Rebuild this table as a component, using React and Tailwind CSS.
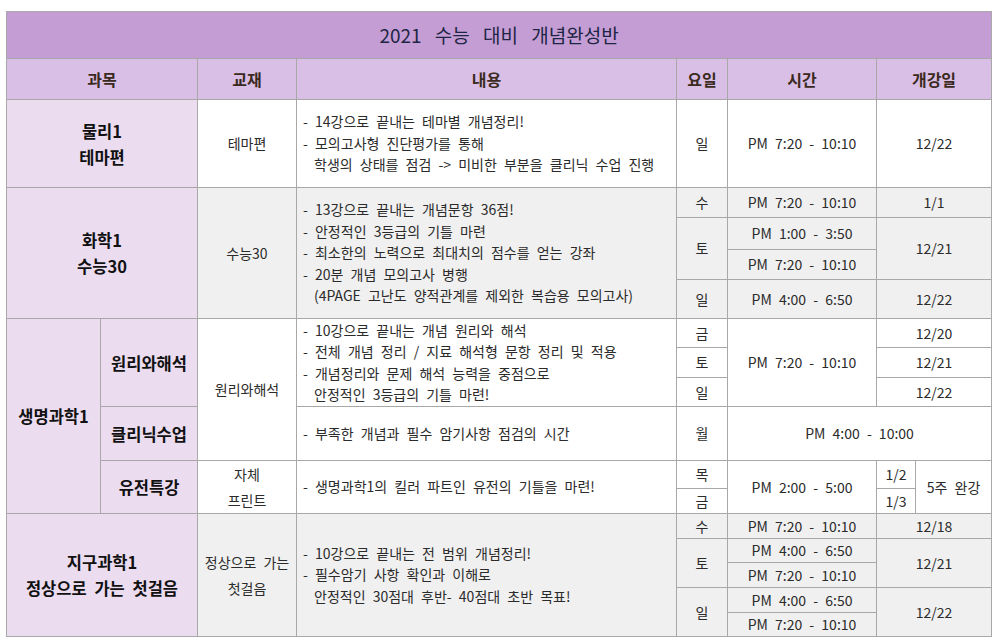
const FONT = { fontFamily: '"Noto Sans CJK KR", "Noto Sans", sans-serif', wordSpacing: "4px" };

const B = "border border-[#a8a8a8]";
const SUBJ = `${B} bg-[#ebdcf0] text-center align-middle font-bold text-[16.5px] text-[#111] leading-[26px]`;
const CELL = `${B} text-center align-middle text-[14px] text-[#2b2b2b]`;
const DESC = `${B} align-middle text-left text-[14px] text-[#2b2b2b] leading-[21.5px] pl-[6px]`;
const HEAD = `${B} font-bold`;

const Lines = ({ items }) => (
  <div>
    {items.map((t, i) => (
      <div key={i} className={t.startsWith("-") ? "" : "pl-[11px]"}>
        {t}
      </div>
    ))}
  </div>
);

const App = () => {
  const g = "bg-[#f0f0f0]";
  return (
    <div className="w-[1000px] h-[644px] bg-white pt-[11px] pl-[6px]" style={FONT}>
      <table className="border-collapse table-fixed w-[985px] border border-[#9a9a9a]">
        <colgroup>
          <col className="w-[94px]" />
          <col className="w-[97px]" />
          <col className="w-[99px]" />
          <col className="w-[380px]" />
          <col className="w-[51px]" />
          <col className="w-[149px]" />
          <col className="w-[39px]" />
          <col className="w-[76px]" />
        </colgroup>
        <tbody>
          <tr className="h-[47px]">
            <th colSpan={8} className={`${B} bg-[#c49dd4] text-[19px] font-normal text-[#1e2544]`} style={{ wordSpacing: "9px" }}>
              2021 수능 대비 개념완성반
            </th>
          </tr>
          <tr className="h-[41px] bg-[#d9bfe6] text-[16px] text-[#3b2a20]">
            <th colSpan={2} className={HEAD}>과목</th>
            <th className={HEAD}>교재</th>
            <th className={HEAD}>내용</th>
            <th className={HEAD}>요일</th>
            <th className={HEAD}>시간</th>
            <th colSpan={2} className={HEAD}>개강일</th>
          </tr>

          {/* 물리 */}
          <tr className="h-[88px]">
            <td colSpan={2} className={SUBJ}>물리1<br />테마편</td>
            <td className={CELL}>테마편</td>
            <td className={DESC}>
              <Lines items={["- 14강으로 끝내는 테마별 개념정리!", "- 모의고사형 진단평가를 통해", "학생의 상태를 점검 -> 미비한 부분을 클리닉 수업 진행"]} />
            </td>
            <td className={CELL}>일</td>
            <td className={CELL}>PM 7:20 - 10:10</td>
            <td colSpan={2} className={CELL}>12/22</td>
          </tr>

          {/* 화학 */}
          <tr className={`h-[30px] ${g}`}>
            <td colSpan={2} rowSpan={4} className={SUBJ}>화학1<br />수능30</td>
            <td rowSpan={4} className={CELL}>수능30</td>
            <td rowSpan={4} className={DESC}>
              <Lines items={["- 13강으로 끝내는 개념문항 36점!", "- 안정적인 3등급의 기틀 마련", "- 최소한의 노력으로 최대치의 점수를 얻는 강좌", "- 20분 개념 모의고사 병행", "(4PAGE 고난도 양적관계를 제외한 복습용 모의고사)"]} />
            </td>
            <td className={CELL}>수</td>
            <td className={CELL}>PM 7:20 - 10:10</td>
            <td colSpan={2} className={CELL}>1/1</td>
          </tr>
          <tr className={`h-[32px] ${g}`}>
            <td rowSpan={2} className={CELL}>토</td>
            <td className={CELL}>PM 1:00 - 3:50</td>
            <td colSpan={2} rowSpan={2} className={CELL}>12/21</td>
          </tr>
          <tr className={`h-[30px] ${g}`}>
            <td className={CELL}>PM 7:20 - 10:10</td>
          </tr>
          <tr className={`h-[39px] ${g}`}>
            <td className={CELL}>일</td>
            <td className={CELL}>PM 4:00 - 6:50</td>
            <td colSpan={2} className={CELL}>12/22</td>
          </tr>

          {/* 생명과학 */}
          <tr className="h-[29px]">
            <td rowSpan={6} className={SUBJ}>생명과학1</td>
            <td rowSpan={3} className={SUBJ}>원리와해석</td>
            <td rowSpan={4} className={CELL}>원리와해석</td>
            <td rowSpan={3} className={DESC}>
              <Lines items={["- 10강으로 끝내는 개념 원리와 해석", "- 전체 개념 정리 / 지료 해석형 문항 정리 및 적용", "- 개념정리와 문제 해석 능력을 중점으로", "안정적인 3등급의 기틀 마련!"]} />
            </td>
            <td className={CELL}>금</td>
            <td rowSpan={3} className={CELL}>PM 7:20 - 10:10</td>
            <td colSpan={2} className={CELL}>12/20</td>
          </tr>
          <tr className="h-[30px]">
            <td className={CELL}>토</td>
            <td colSpan={2} className={CELL}>12/21</td>
          </tr>
          <tr className="h-[29px]">
            <td className={CELL}>일</td>
            <td colSpan={2} className={CELL}>12/22</td>
          </tr>
          <tr className="h-[54px]">
            <td className={SUBJ}>클리닉수업</td>
            <td className={DESC}>
              <Lines items={["- 부족한 개념과 필수 암기사항 점검의 시간"]} />
            </td>
            <td className={CELL}>월</td>
            <td colSpan={3} className={CELL}>PM 4:00 - 10:00</td>
          </tr>
          <tr className="h-[28px]">
            <td rowSpan={2} className={SUBJ}>유전특강</td>
            <td rowSpan={2} className={`${CELL} leading-[26px]`}>자체<br />프린트</td>
            <td rowSpan={2} className={DESC}>
              <Lines items={["- 생명과학1의 킬러 파트인 유전의 기틀을 마련!"]} />
            </td>
            <td className={CELL}>목</td>
            <td rowSpan={2} className={CELL}>PM 2:00 - 5:00</td>
            <td className={CELL}>1/2</td>
            <td rowSpan={2} className={CELL}>5주 완강</td>
          </tr>
          <tr className="h-[25px]">
            <td className={CELL}>금</td>
            <td className={CELL}>1/3</td>
          </tr>

          {/* 지구과학 */}
          <tr className={`h-[25px] ${g}`}>
            <td colSpan={2} rowSpan={5} className={SUBJ}>지구과학1<br />정상으로 가는 첫걸음</td>
            <td rowSpan={5} className={`${CELL} leading-[26px]`}>정상으로 가는<br />첫걸음</td>
            <td rowSpan={5} className={DESC}>
              <Lines items={["- 10강으로 끝내는 전 범위 개념정리!", "- 필수암기 사항 확인과 이해로", "안정적인 30점대 후반- 40점대 초반 목표!"]} />
            </td>
            <td className={CELL}>수</td>
            <td className={CELL}>PM 7:20 - 10:10</td>
            <td colSpan={2} className={CELL}>12/18</td>
          </tr>
          <tr className={`h-[24px] ${g}`}>
            <td rowSpan={2} className={CELL}>토</td>
            <td className={CELL}>PM 4:00 - 6:50</td>
            <td colSpan={2} rowSpan={2} className={CELL}>12/21</td>
          </tr>
          <tr className={`h-[25px] ${g}`}>
            <td className={CELL}>PM 7:20 - 10:10</td>
          </tr>
          <tr className={`h-[25px] ${g}`}>
            <td rowSpan={2} className={CELL}>일</td>
            <td className={CELL}>PM 4:00 - 6:50</td>
            <td colSpan={2} rowSpan={2} className={CELL}>12/22</td>
          </tr>
          <tr className={`h-[24px] ${g}`}>
            <td className={CELL}>PM 7:20 - 10:10</td>
          </tr>
        </tbody>
      </table>
    </div>
  );
};

export default App;
